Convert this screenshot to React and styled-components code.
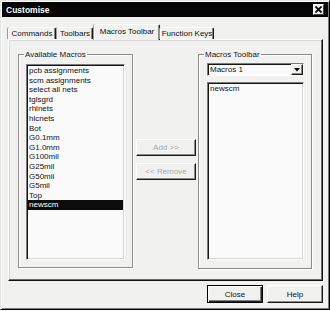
import React from "react";
import styled, { createGlobalStyle } from "styled-components";

const GlobalStyle = createGlobalStyle`
  html, body {
    margin: 0;
    padding: 0;
    background: #ffffff;
  }
  * {
    box-sizing: border-box;
  }
`;

const Window = styled.div`
  width: 330px;
  height: 310px;
  padding: 1px;
  background: #f1f2f0;
  border: 1px solid;
  border-color: #e4e4e4 #000000 #000000 #e4e4e4;
  box-shadow: inset 1px 1px 0 #ffffff, inset -1px -1px 0 #7c7c7c;
  font-family: "Liberation Sans", Arial, sans-serif;
  font-size: 8px;
  color: #111111;
  display: flex;
  flex-direction: column;
`;

const TitleBar = styled.div`
  height: 15px;
  background: #050505;
  display: flex;
  align-items: center;
  justify-content: space-between;
  padding: 0 4px 0 4px;
`;

const TitleText = styled.span`
  color: #ffffff;
  font-weight: bold;
  font-size: 8.5px;
`;

const CloseBox = styled.div`
  width: 11px;
  height: 11px;
  background: #eeeeee;
  border: 1px solid;
  border-color: #ffffff #404040 #404040 #ffffff;
  display: flex;
  align-items: center;
  justify-content: center;
`;

const TabStrip = styled.div`
  display: flex;
  align-items: flex-end;
  height: 15px;
  margin: 7px 0 0 6px;
  position: relative;
  z-index: 1;
`;

const Tab = styled.div`
  width: ${(p) => p.$width}px;
  margin-left: ${(p) => p.$gap || 0}px;
  height: ${(p) => (p.$active ? 16 : 12)}px;
  margin-bottom: ${(p) => (p.$active ? -1 : 0)}px;
  padding-bottom: ${(p) => (p.$active ? 2 : 0)}px;
  background: #f1f2f0;
  border: 1px solid;
  border-bottom: none;
  border-color: #ffffff #1a1a1a #ffffff #ffffff;
  border-radius: 2px 2px 0 0;
  box-shadow: inset -1px 0 0 #8a8a8a, -1px 0 0 #9a9a9a;
  display: flex;
  align-items: center;
  justify-content: center;
  white-space: nowrap;
`;

const Panel = styled.div`
  width: 315px;
  height: 242px;
  margin-left: 6px;
  border: 1px solid;
  border-color: #ffffff #111111 #111111 #ffffff;
  box-shadow: inset -1px -1px 0 #6c6c6c, inset 1px 1px 0 #d8d8d8;
  padding: 10px 8px 0 9px;
  display: flex;
  align-items: flex-start;
`;

const GroupBox = styled.fieldset`
  margin: 0 0 0 ${(p) => p.$gap || 0}px;
  padding: 0;
  width: ${(p) => p.$width}px;
  min-width: 0;
  border: 1px solid #8c8c8c;
  box-shadow: inset 1px 1px 0 #ffffff, 1px 1px 0 #ffffff;
`;

const GroupLabel = styled.legend`
  margin-left: 5px;
  padding: 0 1px;
  line-height: 9px;
  font-size: 8px;
`;

const ListBox = styled.div`
  width: ${(p) => p.$width}px;
  height: ${(p) => p.$height}px;
  margin: ${(p) => p.$top}px 0 ${(p) => p.$bottom}px ${(p) => p.$left}px;
  background: #fafafa;
  border: 1px solid;
  border-color: #7a7a7a #ffffff #ffffff #7a7a7a;
  box-shadow: inset 1px 1px 0 #151515, inset -1px -1px 0 #d6d6d6;
  padding: 1px 1px;
  overflow: hidden;
`;

const ListItem = styled.div`
  height: 9.6px;
  line-height: 9.6px;
  padding-left: 1px;
  white-space: nowrap;
  background: ${(p) => (p.$selected ? "#0c0c0c" : "transparent")};
  color: ${(p) => (p.$selected ? "#ffffff" : "#111111")};
`;

const ButtonColumn = styled.div`
  width: 60px;
  margin-left: 3px;
  padding-top: 89px;
  display: flex;
  flex-direction: column;
  gap: 7px;
`;

const PushButton = styled.div`
  width: ${(p) => p.$width || 60}px;
  height: ${(p) => p.$height || 17}px;
  background: #f1f2f0;
  border: 1px solid;
  border-color: ${(p) =>
    p.$default ? "#000000" : "#ffffff #1a1a1a #1a1a1a #ffffff"};
  box-shadow: ${(p) =>
    p.$default
      ? "inset 1px 1px 0 #ffffff, inset -1px -1px 0 #222222, inset -2px -2px 0 #808080"
      : "inset -1px -1px 0 #8a8a8a"};
  display: flex;
  align-items: center;
  justify-content: center;
  font-size: 8px;
  color: ${(p) => (p.$disabled ? "#a4a4a4" : "#111111")};
  text-shadow: ${(p) => (p.$disabled ? "1px 1px 0 #ffffff" : "none")};
`;

const Combo = styled.div`
  width: 97px;
  height: 13px;
  margin: 4px 0 0 8px;
  background: #fafafa;
  border: 1px solid;
  border-color: #7a7a7a #ffffff #ffffff #7a7a7a;
  box-shadow: inset 1px 1px 0 #151515;
  display: flex;
  align-items: center;
  padding: 1px 0 0 2px;
`;

const ComboText = styled.span`
  flex: 1;
  line-height: 10px;
`;

const DropButton = styled.div`
  width: 12px;
  height: 11px;
  margin-top: -1px;
  background: #f1f2f0;
  border: 1px solid;
  border-color: #ffffff #1a1a1a #1a1a1a #ffffff;
  box-shadow: inset -1px -1px 0 #8a8a8a;
  display: flex;
  align-items: center;
  justify-content: center;
`;

const Footer = styled.div`
  display: flex;
  justify-content: flex-end;
  gap: 4px;
  margin-top: 4px;
  padding-right: 5px;
`;

const macros = [
  "pcb assignments",
  "scm assignments",
  "select all nets",
  "tglsgrd",
  "rhlnets",
  "hlcnets",
  "Bot",
  "G0.1mm",
  "G1.0mm",
  "G100mil",
  "G25mil",
  "G50mil",
  "G5mil",
  "Top",
  "newscm",
];

const tabs = [
  { name: "Commands", width: 48, gap: 0 },
  { name: "Toolbars", width: 36, gap: 1 },
  { name: "Macros Toolbar", width: 66, gap: 1, active: true },
  { name: "Function Keys", width: 54, gap: 0 },
];

export default function App() {
  return (
    <>
      <GlobalStyle />
      <Window>
        <TitleBar>
          <TitleText>Customise</TitleText>
          <CloseBox>
            <svg width="7" height="7" viewBox="0 0 7 7">
              <path d="M0.5 0.5 L6.5 6.5 M6.5 0.5 L0.5 6.5" stroke="#000" strokeWidth="1.8" />
            </svg>
          </CloseBox>
        </TitleBar>
        <TabStrip>
          {tabs.map((t) => (
            <Tab key={t.name} $width={t.width} $gap={t.gap} $active={t.active}>
              {t.name}
            </Tab>
          ))}
        </TabStrip>
        <Panel>
          <GroupBox $width={115}>
            <GroupLabel>Available Macros</GroupLabel>
            <ListBox $width={99} $height={196} $top={5} $bottom={7} $left={7}>
              {macros.map((m) => (
                <ListItem key={m} $selected={m === "newscm"}>
                  {m}
                </ListItem>
              ))}
            </ListBox>
          </GroupBox>
          <ButtonColumn>
            <PushButton $disabled>Add &gt;&gt;</PushButton>
            <PushButton $disabled>&lt;&lt; Remove</PushButton>
          </ButtonColumn>
          <GroupBox $width={114} $gap={2}>
            <GroupLabel>Macros Toolbar</GroupLabel>
            <Combo>
              <ComboText>Macros 1</ComboText>
              <DropButton>
                <svg width="6" height="4" viewBox="0 0 6 4">
                  <path d="M0 0 H6 L3 3.5 Z" fill="#000" />
                </svg>
              </DropButton>
            </Combo>
            <ListBox $width={97} $height={178} $top={6} $bottom={8} $left={8}>
              <ListItem>newscm</ListItem>
            </ListBox>
          </GroupBox>
        </Panel>
        <Footer>
          <PushButton $default $width={56} $height={18}>
            Close
          </PushButton>
          <PushButton $width={56} $height={18}>
            Help
          </PushButton>
        </Footer>
      </Window>
    </>
  );
}
